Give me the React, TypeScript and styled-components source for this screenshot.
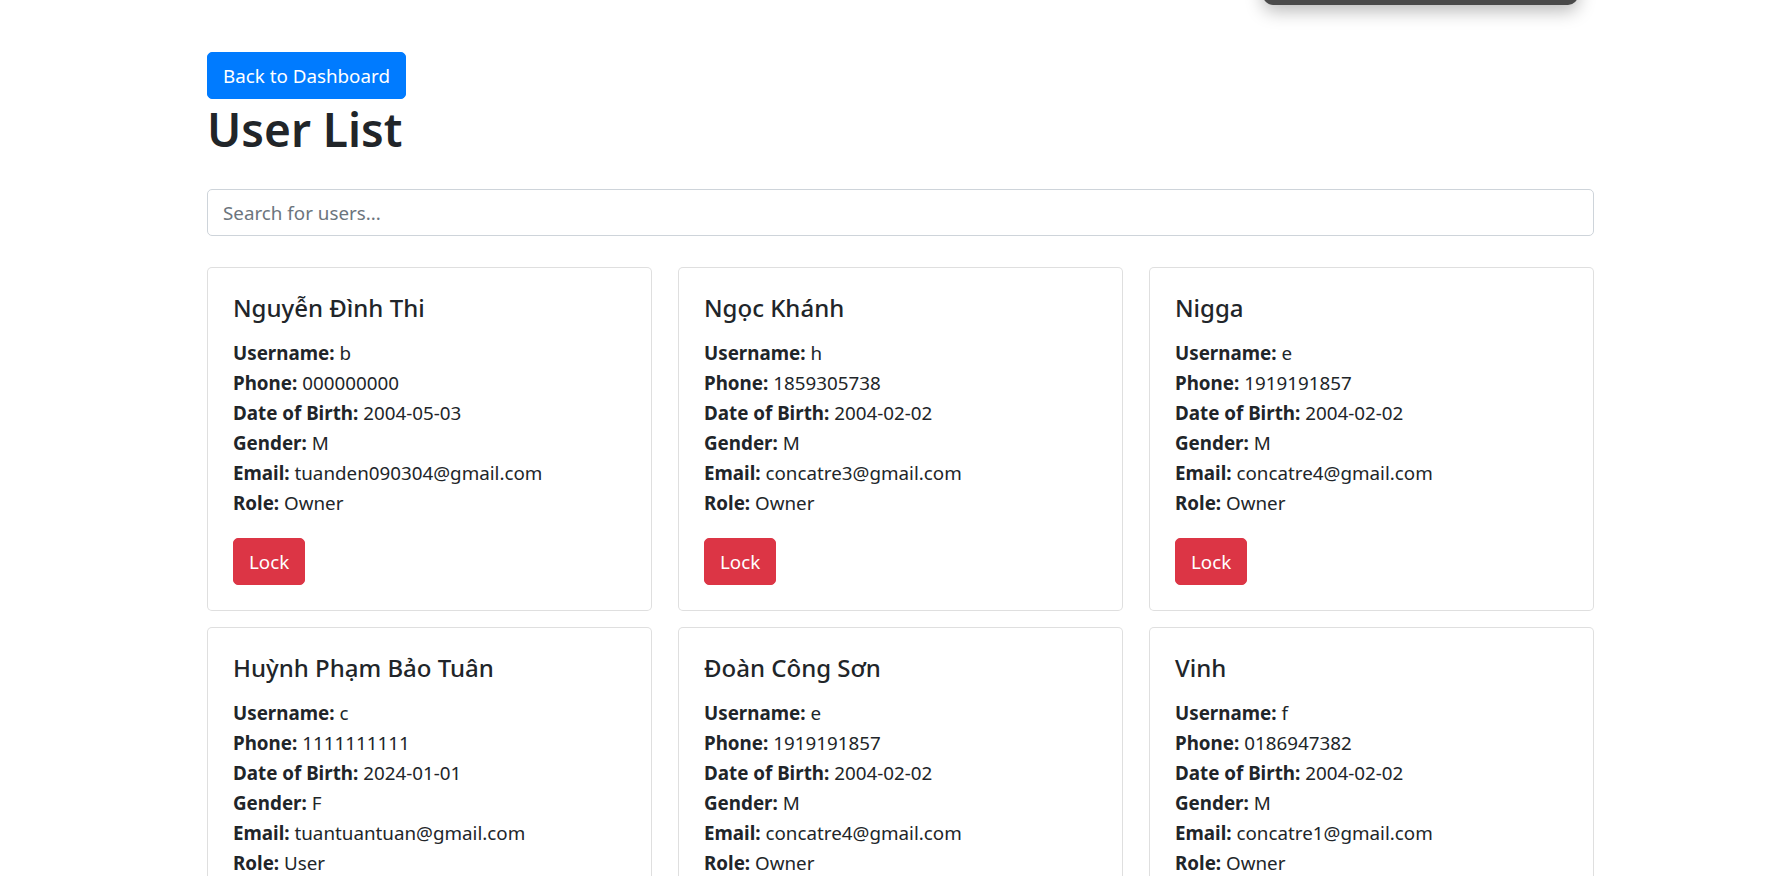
import styled, { createGlobalStyle } from 'styled-components'

type User = {
	name: string
	username: string
	phone: string
	dob: string
	gender: string
	email: string
	role: string
}

const USERS: Array<User> = [
	{ name: 'Nguyễn Đình Thi', username: 'b', phone: '000000000', dob: '2004-05-03', gender: 'M', email: 'tuanden090304@gmail.com', role: 'Owner' },
	{ name: 'Ngọc Khánh', username: 'h', phone: '1859305738', dob: '2004-02-02', gender: 'M', email: 'concatre3@gmail.com', role: 'Owner' },
	{ name: 'Nigga', username: 'e', phone: '1919191857', dob: '2004-02-02', gender: 'M', email: 'concatre4@gmail.com', role: 'Owner' },
	{ name: 'Huỳnh Phạm Bảo Tuân', username: 'c', phone: '1111111111', dob: '2024-01-01', gender: 'F', email: 'tuantuantuan@gmail.com', role: 'User' },
	{ name: 'Đoàn Công Sơn', username: 'e', phone: '1919191857', dob: '2004-02-02', gender: 'M', email: 'concatre4@gmail.com', role: 'Owner' },
	{ name: 'Vinh', username: 'f', phone: '0186947382', dob: '2004-02-02', gender: 'M', email: 'concatre1@gmail.com', role: 'Owner' },
]

function App() {
	return (
		<>
			<GlobalStyle />
			<Floating />
			<Page>
				<Container>
					<Button $variant='primary'>Back to Dashboard</Button>
					<Title>User List</Title>
					<Search placeholder='Search for users...' />
					<Grid>
						{ USERS.map((user, i) => (
							<Card key={i}>
								<CardTitle>{ user.name }</CardTitle>
								<Details>
									<Line><b>Username:</b> { user.username }</Line>
									<Line><b>Phone:</b> { user.phone }</Line>
									<Line><b>Date of Birth:</b> { user.dob }</Line>
									<Line><b>Gender:</b> { user.gender }</Line>
									<Line><b>Email:</b> { user.email }</Line>
									<Line><b>Role:</b> { user.role }</Line>
								</Details>
								<div>
									<Button $variant='danger'>Lock</Button>
								</div>
							</Card>
						)) }
					</Grid>
				</Container>
			</Page>
		</>
	)
}

export default App

let GlobalStyle = createGlobalStyle`
	body {
		margin: 0;
		background: #fff;
		color: #212529;
		font-family: "Noto Sans", "Open Sans", sans-serif;
		font-size: 18.8px;
		line-height: 30px;
	}
	* { box-sizing: border-box; }
`

let Floating = styled.div`
	position: absolute;
	top: -40px;
	left: 1263px;
	width: 315px;
	height: 45px;
	background: #4a4a4a;
	border-radius: 10px;
	box-shadow: 0 6px 18px rgba(0, 0, 0, 0.28);
`

let Page = styled.div`
	padding: 52px 179px 40px 207px;
`

let Container = styled.div`
	display: flex;
	flex-direction: column;
	align-items: flex-start;
`

let Button = styled.button<{ $variant: 'primary' | 'danger' }>`
	font-family: inherit;
	font-size: 18.8px;
	line-height: 30px;
	padding: 7.5px 15px;
	border: 1px solid ${p => p.$variant === 'primary' ? '#007bff' : '#dc3545'};
	background: ${p => p.$variant === 'primary' ? '#007bff' : '#dc3545'};
	color: #fff;
	border-radius: 5px;
	cursor: pointer;
`

let Title = styled.h1`
	font-size: 46px;
	font-weight: 600;
	line-height: 60px;
	margin: 0 0 30px;
`

let Search = styled.input`
	width: 100%;
	height: 47px;
	padding: 7.5px 15px;
	font-family: inherit;
	font-size: 18.8px;
	color: #495057;
	border: 1px solid #ced4da;
	border-radius: 5px;
	margin-bottom: 31px;
	outline: none;

	&::placeholder {
		color: #6c757d;
	}
`

let Grid = styled.div`
	width: 100%;
	display: grid;
	grid-template-columns: repeat(3, 1fr);
	column-gap: 26px;
	row-gap: 16px;
`

let Card = styled.div`
	border: 1px solid rgba(0, 0, 0, 0.125);
	border-radius: 5px;
	padding: 25px;
	background: #fff;
`

let CardTitle = styled.h5`
	font-size: 24px;
	font-weight: 500;
	line-height: 30px;
	margin: 0 0 15px;
`

let Details = styled.div`
	margin-bottom: 20px;
`

let Line = styled.div`
	b {
		font-weight: 700;
	}
`
